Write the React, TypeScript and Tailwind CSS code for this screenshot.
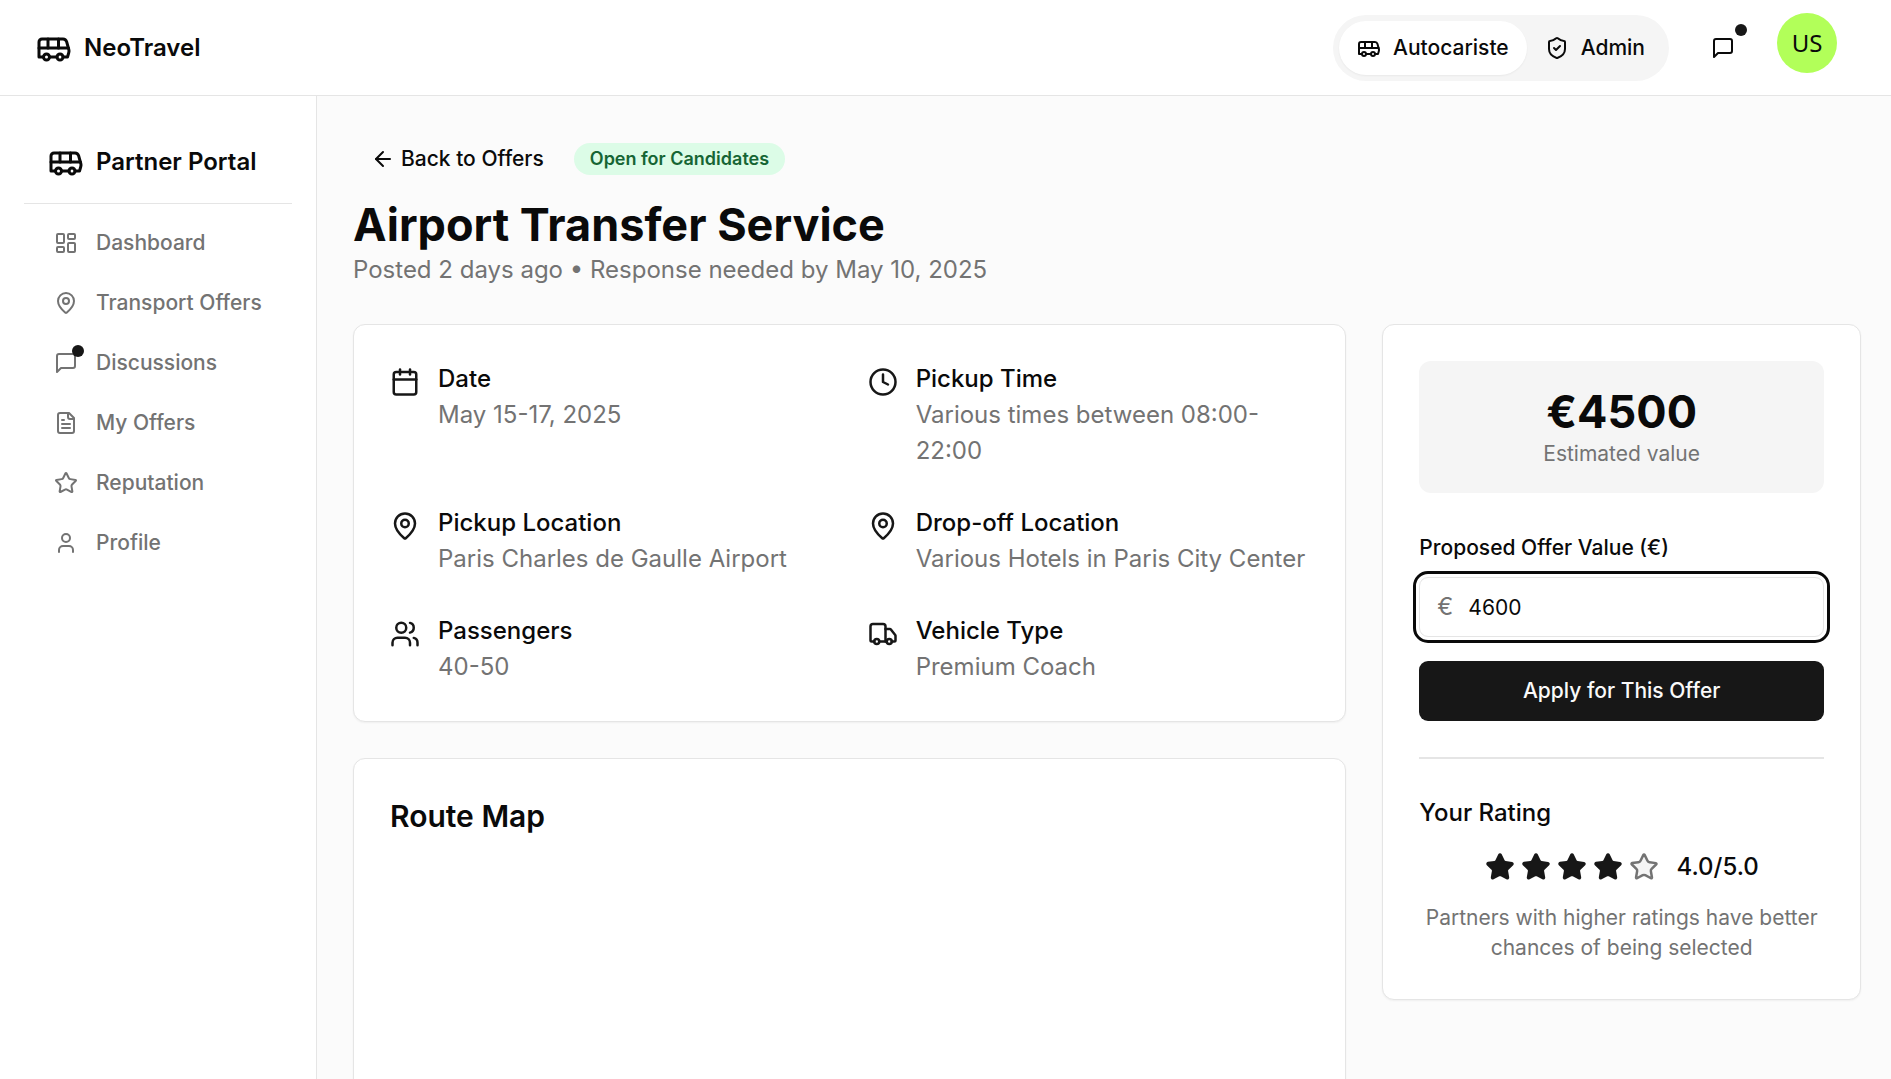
import type { ReactNode } from "react";
import {
  ArrowLeft,
  Bus,
  Calendar,
  Clock,
  LayoutDashboard,
  MapPin,
  ShieldCheck,
  Star,
  Truck,
  User,
  Users,
} from "lucide-react";

type IconProps = { className?: string };

function MessageIcon({ className }: IconProps) {
  return (
    <svg className={className} viewBox="0 0 24 24" fill="none" stroke="currentColor" strokeWidth={2} strokeLinecap="round" strokeLinejoin="round" aria-hidden="true">
      <path d="M21 15a2 2 0 0 1-2 2H7l-4 4V5a2 2 0 0 1 2-2h14a2 2 0 0 1 2 2z" />
    </svg>
  );
}

function FileIcon({ className }: IconProps) {
  return (
    <svg className={className} viewBox="0 0 24 24" fill="none" stroke="currentColor" strokeWidth={2} strokeLinecap="round" strokeLinejoin="round" aria-hidden="true">
      <path d="M15 2H6a2 2 0 0 0-2 2v16a2 2 0 0 0 2 2h12a2 2 0 0 0 2-2V7Z" />
      <path d="M14 2v4a2 2 0 0 0 2 2h4" />
      <path d="M10 9H8" />
      <path d="M16 13H8" />
      <path d="M16 17H8" />
    </svg>
  );
}

const NAV = [
  { label: "Dashboard", Icon: LayoutDashboard },
  { label: "Transport Offers", Icon: MapPin },
  { label: "Discussions", Icon: MessageIcon, dot: true },
  { label: "My Offers", Icon: FileIcon },
  { label: "Reputation", Icon: Star },
  { label: "Profile", Icon: User },
];

const DETAILS = [
  { label: "Date", value: "May 15-17, 2025", Icon: Calendar },
  { label: "Pickup Time", value: "Various times between 08:00-22:00", Icon: Clock },
  { label: "Pickup Location", value: "Paris Charles de Gaulle Airport", Icon: MapPin },
  { label: "Drop-off Location", value: "Various Hotels in Paris City Center", Icon: MapPin },
  { label: "Passengers", value: "40-50", Icon: Users },
  { label: "Vehicle Type", value: "Premium Coach", Icon: Truck },
];

function Card({ children }: { children: ReactNode }) {
  return (
    <section className="rounded-xl border border-neutral-200 bg-white p-9 shadow-xs">
      {children}
    </section>
  );
}

function Header() {
  return (
    <header className="flex h-24 shrink-0 items-center justify-between border-b border-neutral-200 bg-white pr-[54px] pl-9">
      <a href="#" className="flex items-center gap-3 text-2xl leading-9 font-semibold">
        <Bus className="size-9" />
        NeoTravel
      </a>
      <div className="flex items-center gap-6">
        <div className="flex rounded-full bg-neutral-100 p-1.5 text-[21px] leading-[30px] font-medium">
          <button type="button" className="flex items-center gap-3 rounded-full bg-white px-[18px] py-3 shadow-xs">
            <Bus className="size-6" />
            Autocariste
          </button>
          <button type="button" className="flex items-center gap-3 rounded-full px-[18px] py-3">
            <ShieldCheck className="size-6" />
            Admin
          </button>
        </div>
        <button type="button" aria-label="Messages" className="relative flex size-[60px] items-center justify-center">
          <MessageIcon className="size-6" />
          <span className="absolute top-1.5 right-1.5 size-3 rounded-full bg-neutral-900" />
        </button>
        <button type="button" className="mb-2.5 flex size-[60px] items-center justify-center rounded-full bg-[#b2ff59] font-['Noto_Sans',sans-serif] text-2xl">
          US
        </button>
      </div>
    </header>
  );
}

function Sidebar() {
  return (
    <aside className="w-[317px] shrink-0 border-r border-neutral-200 bg-white p-6">
      <div className="flex items-center gap-3 border-b border-neutral-200 px-6 pt-6 pb-[23px] text-2xl leading-9 font-semibold">
        <Bus className="size-9" />
        Partner Portal
      </div>
      <nav className="mt-3 flex flex-col gap-1.5 px-3">
        {NAV.map(({ label, Icon, dot }) => (
          <a key={label} href="#" className="flex items-center gap-[18px] px-[18px] py-3 text-[21px] leading-[30px] font-medium whitespace-nowrap text-neutral-500">
            <span className="relative">
              <Icon className="size-6" />
              {dot && <span className="absolute -top-1.5 -right-1.5 size-3 rounded-full bg-neutral-900" />}
            </span>
            {label}
          </a>
        ))}
      </nav>
    </aside>
  );
}

function OfferDetails() {
  return (
    <Card>
      <dl className="grid grid-cols-2 gap-9">
        {DETAILS.map(({ label, value, Icon }) => (
          <div key={label} className="flex gap-[18px]">
            <Icon className="mt-1.5 size-[30px] shrink-0 text-neutral-900" />
            <div className="text-2xl leading-9">
              <dt className="font-medium">{label}</dt>
              <dd className="text-neutral-500">{value}</dd>
            </div>
          </div>
        ))}
      </dl>
    </Card>
  );
}

function OfferPanel() {
  return (
    <Card>
      <div className="rounded-xl bg-neutral-100 p-6 text-center">
        <p className="text-[45px] leading-[54px] font-bold">€4500</p>
        <p className="text-[21px] leading-[30px] text-neutral-500">Estimated value</p>
      </div>
      <form className="mt-9" onSubmit={(e) => e.preventDefault()}>
        <label htmlFor="offer" className="block text-[21px] leading-[38px] font-medium">
          Proposed Offer Value (€)
        </label>
        <div className="relative mt-2.5">
          <span className="absolute inset-y-0 left-[18px] flex items-center text-2xl text-neutral-500">€</span>
          <input
            id="offer"
            type="text"
            inputMode="numeric"
            defaultValue="4600"
            className="block h-[60px] w-full rounded-[9px] border border-neutral-200 bg-white pr-[18px] pl-12 text-[21px] leading-[30px] outline-3 outline-offset-3 outline-neutral-950"
          />
        </div>
        <button type="submit" className="mt-6 h-[60px] w-full rounded-[9px] bg-neutral-900 text-[21px] leading-[30px] font-medium text-neutral-50">
          Apply for This Offer
        </button>
      </form>
      <hr className="my-9 border-t-2 border-neutral-200" />
      <h3 className="text-2xl leading-9 font-medium">Your Rating</h3>
      <div className="mt-[18px] flex items-center justify-center gap-[18px]">
        <div className="flex gap-1.5">
          {[1, 2, 3, 4, 5].map((n) => (
            <Star
              key={n}
              className={n <= 4 ? "size-[30px] fill-neutral-900 text-neutral-900" : "size-[30px] fill-neutral-100 text-neutral-500"}
            />
          ))}
        </div>
        <span className="text-2xl leading-9 font-medium">4.0/5.0</span>
      </div>
      <p className="mt-[18px] text-center text-[21px] leading-[30px] text-neutral-500">
        Partners with higher ratings have better chances of being selected
      </p>
    </Card>
  );
}

export default function App() {
  return (
    <div className="flex h-screen flex-col bg-[#fbfbfb] font-['Inter',sans-serif] text-neutral-950">
      <Header />
      <div className="flex min-h-0 flex-1">
        <Sidebar />
        <main className="min-w-0 flex-1 overflow-y-auto py-9 pr-[30px] pl-9 [scrollbar-width:none]">
          <div className="flex items-center gap-3">
            <button type="button" className="flex items-center gap-1.5 px-[18px] py-3 text-[21px] leading-[30px] font-medium">
              <ArrowLeft className="size-6" />
              Back to Offers
            </button>
            <span className="rounded-full bg-[#dcfce7] px-4 py-1 text-lg leading-6 font-semibold text-[#166534]">
              Open for Candidates
            </span>
          </div>
          <h1 className="mt-3 text-[45px] leading-[54px] font-bold">Airport Transfer Service</h1>
          <p className="text-2xl leading-9 text-neutral-500">Posted 2 days ago • Response needed by May 10, 2025</p>
          <div className="mt-9 grid grid-cols-3 items-start gap-9">
            <div className="col-span-2 flex flex-col gap-9">
              <OfferDetails />
              <Card>
                <h2 className="text-[30px] leading-[42px] font-semibold">Route Map</h2>
                <div className="mt-6 h-96" />
              </Card>
            </div>
            <OfferPanel />
          </div>
        </main>
      </div>
    </div>
  );
}
